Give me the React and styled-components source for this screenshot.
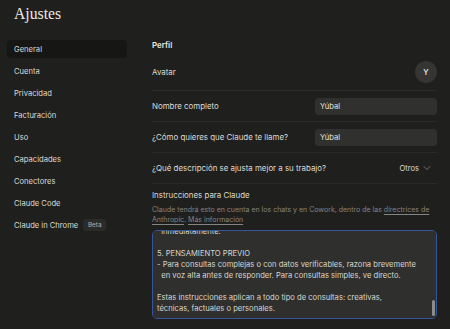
import { useLayoutEffect, useRef } from "react";
import styled, { createGlobalStyle } from "styled-components";
import { ChevronDown } from "lucide-react";

const GlobalStyle = createGlobalStyle`
  html, body {
    margin: 0;
    padding: 0;
    background: #1f1f1e;
  }
  body {
    font-family: Inter, "Noto Sans", "Liberation Sans", sans-serif;
    color: #e0ded6;
    -webkit-font-smoothing: antialiased;
  }
`;

const Page = styled.div`
  height: 329px;
  overflow: hidden;
  padding: 0 13px 0 7px;
  box-sizing: border-box;
`;

const Header = styled.header`
  height: 39px;
  padding: 4px 0 0 7px;
  box-sizing: border-box;
`;

const Title = styled.h1`
  margin: 0;
  font-family: "Liberation Serif", "DejaVu Serif", serif;
  font-weight: 400;
  font-size: 15.7px;
  line-height: 20px;
  color: #ebe9e1;
`;

const Layout = styled.div`
  display: grid;
  grid-template-columns: 120px 1fr;
  column-gap: 25px;
`;

const Sidebar = styled.nav`
  display: flex;
  flex-direction: column;
  gap: 4px;
  margin-top: 1px;
`;

const NavItem = styled.div`
  display: flex;
  align-items: center;
  gap: 5px;
  height: 18px;
  padding-left: 7px;
  border-radius: 4px;
  font-size: 7.6px;
  color: #dcdad2;
  background: ${(p) => (p.$active ? "#161615" : "transparent")};
`;

const Badge = styled.span`
  display: inline-flex;
  align-items: center;
  justify-content: center;
  width: 23px;
  height: 12px;
  border-radius: 3px;
  background: #2b2b29;
  color: #b4b2aa;
  font-size: 6.4px;
`;

const Main = styled.main`
  display: flex;
  flex-direction: column;
`;

const SectionTitle = styled.h2`
  margin: 0 0 3px;
  font-size: 7.9px;
  line-height: 12px;
  font-weight: 600;
  color: #ebe9e1;
`;

const Row = styled.div`
  display: flex;
  align-items: center;
  justify-content: space-between;
  padding: ${(p) => (p.$tall ? "7px" : "6.5px")} 0;
  border-bottom: 1px solid #2a2a28;
`;

const Label = styled.span`
  font-size: 7.9px;
  color: #dedcd4;
`;

const Avatar = styled.div`
  width: 22px;
  height: 22px;
  border-radius: 50%;
  background: #353533;
  display: flex;
  align-items: center;
  justify-content: center;
  font-size: 7.6px;
  font-weight: 500;
  color: #f2f0e8;
`;

const TextInput = styled.div`
  width: 122px;
  height: 17px;
  box-sizing: border-box;
  padding-left: 5px;
  display: flex;
  align-items: center;
  border-radius: 4px;
  background: #30302e;
  font-size: 7.6px;
  color: #e6e4dc;
`;

const Select = styled.div`
  display: flex;
  align-items: center;
  gap: 2px;
  height: 17px;
  padding-right: 4px;
  font-size: 7.6px;
  color: #dedcd4;
  svg {
    color: #8d8c86;
  }
`;

const Block = styled.div`
  padding-top: 6px;
  display: flex;
  flex-direction: column;
`;

const Help = styled.p`
  margin: 5px 0 5px;
  font-size: 7px;
  line-height: 10px;
  color: #858480;
  a {
    color: inherit;
    text-decoration: underline;
    text-underline-offset: 1.5px;
  }
`;

const EditorFrame = styled.div`
  position: relative;
  height: 89px;
`;

const Instructions = styled.textarea`
  display: block;
  width: 100%;
  height: 100%;
  box-sizing: border-box;
  margin: 0;
  padding: 4px 8px 4px 4px;
  border: 1px solid #35569b;
  border-radius: 5px;
  background: #2f2f2d;
  color: #d8d6ce;
  caret-color: #e8e6de;
  font-family: Inter, "Noto Sans", "Liberation Sans", sans-serif;
  font-size: 7.6px;
  line-height: 11px;
  resize: none;
  outline: none;
  overflow-y: scroll;
  overflow-x: hidden;
  white-space: pre;
  scrollbar-width: none;
  &::-webkit-scrollbar {
    display: none;
  }
`;

const ScrollThumb = styled.div`
  position: absolute;
  right: 2px;
  width: 3px;
  border-radius: 2px;
  background: #8c8c89;
  pointer-events: none;
`;

const NAV = [
  "General",
  "Cuenta",
  "Privacidad",
  "Facturación",
  "Uso",
  "Capacidades",
  "Conectores",
  "Claude Code",
];

const INSTRUCTIONS = `Sobre mí: soy periodista tecnológico y escribo a diario sobre
inteligencia artificial, productividad y software.

Responde siempre en español de España, con un tono cercano pero
profesional. Evita rodeos y ve al grano.

1. FORMATO
- Usa párrafos cortos y claros. Evita las listas salvo que sean
  realmente necesarias.
- Usa negritas solo para destacar lo imprescindible.
- No uses emojis ni exclamaciones innecesarias.
- Si la respuesta es larga, empieza por un resumen de una línea.
- Cuando compartas código, incluye siempre comentarios breves.

2. PRECISIÓN
- Si no sabes algo, dilo claramente. No inventes datos, cifras
  ni fuentes.
- Distingue entre hechos contrastados y opiniones o estimaciones.
- Indica la fecha de tus datos si pueden estar desactualizados.
- Cita las fuentes cuando sea posible.

3. ESTILO
- Escribe con naturalidad, sin frases hechas ni fórmulas de
  cortesía vacías.
- Prefiere la voz activa y las frases directas.
- Evita repetir la pregunta antes de responder.
- Adapta la extensión de la respuesta a la complejidad de la
  consulta.

4. CORRECCIONES
- Si te corrijo, no te disculpes en exceso. Reconoce el error y
  corrígelo.
- Si detectas un error en lo que te digo, señálalo
  inmediatamente.

5. PENSAMIENTO PREVIO
- Para consultas complejas o con datos verificables, razona brevemente
  en voz alta antes de responder. Para consultas simples, ve directo.

Estas instrucciones aplican a todo tipo de consultas: creativas,
técnicas, factuales o personales.`;

const App = () => {
  const areaRef = useRef(null);

  useLayoutEffect(() => {
    const el = areaRef.current;
    if (!el) return;
    el.focus({ preventScroll: true });
    el.setSelectionRange(el.value.length, el.value.length);
    el.scrollTop = el.scrollHeight;
  }, []);

  return (
    <Page>
      <GlobalStyle />
      <Header>
        <Title>Ajustes</Title>
      </Header>
      <Layout>
        <Sidebar>
          {NAV.map((item, i) => (
            <NavItem key={item} $active={i === 0}>
              {item}
            </NavItem>
          ))}
          <NavItem>
            Claude in Chrome <Badge>Beta</Badge>
          </NavItem>
        </Sidebar>
        <Main>
          <SectionTitle>Perfil</SectionTitle>
          <Row $tall>
            <Label>Avatar</Label>
            <Avatar>Y</Avatar>
          </Row>
          <Row>
            <Label>Nombre completo</Label>
            <TextInput>Yúbal</TextInput>
          </Row>
          <Row>
            <Label>¿Cómo quieres que Claude te llame?</Label>
            <TextInput>Yúbal</TextInput>
          </Row>
          <Row>
            <Label>¿Qué descripción se ajusta mejor a su trabajo?</Label>
            <Select>
              Otros <ChevronDown size={12} strokeWidth={1.5} />
            </Select>
          </Row>
          <Block>
            <Label>Instrucciones para Claude</Label>
            <Help>
              Claude tendrá esto en cuenta en los chats y en Cowork, dentro de las{" "}
              <a>directrices de Anthropic</a>. <a>Más información</a>
            </Help>
            <EditorFrame>
              <Instructions
                ref={areaRef}
                defaultValue={INSTRUCTIONS}
                spellCheck={false}
              />
              <ScrollThumb style={{ bottom: 3, height: 16 }} />
            </EditorFrame>
          </Block>
        </Main>
      </Layout>
    </Page>
  );
};

export default App;
